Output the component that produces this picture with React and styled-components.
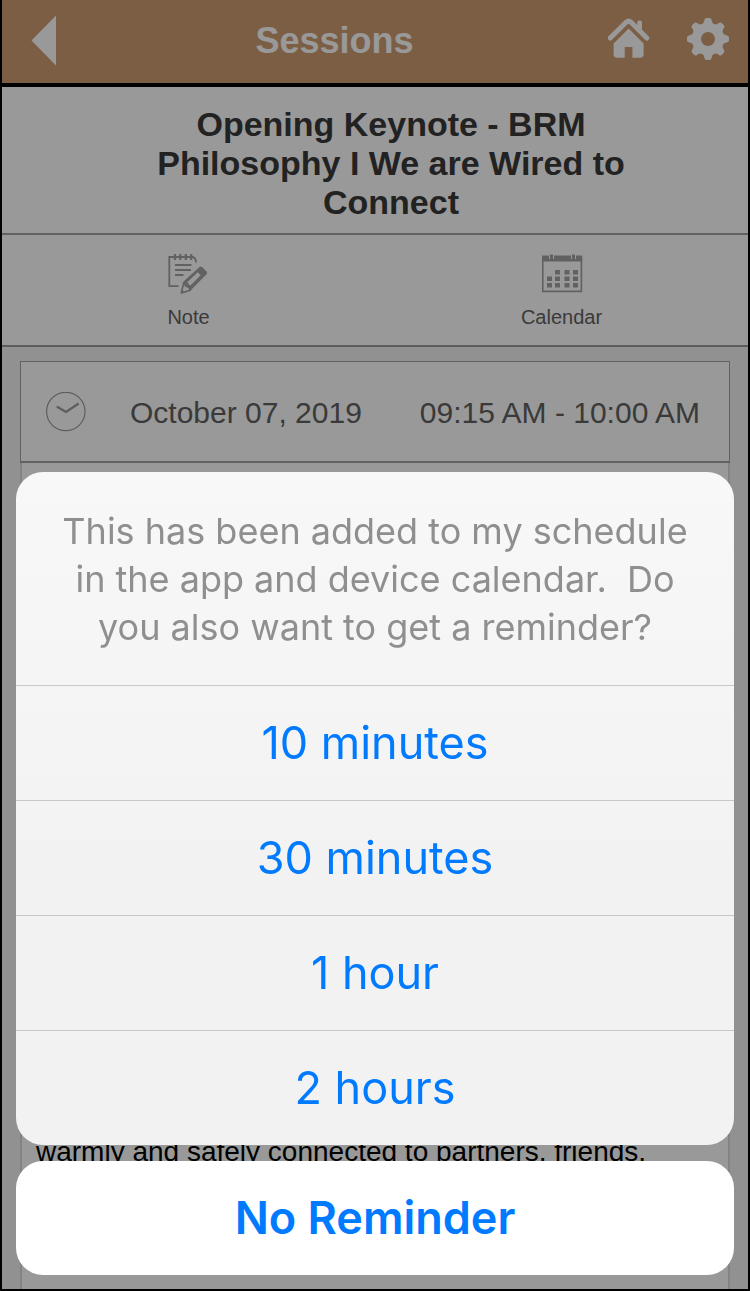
import styled, { createGlobalStyle } from 'styled-components'

const GlobalStyle = createGlobalStyle`
    *{
        box-sizing: border-box;
    }
    body{
        margin: 0;
        background: #000;
        font-family: 'Liberation Sans', Arial, sans-serif;
    }
    h1, h2, p{
        margin: 0;
    }
    button{
        border: 0;
        padding: 0;
        background: none;
        font: inherit;
        color: inherit;
        cursor: pointer;
    }
    svg{
        display: block;
    }
`

const Page = styled.div`
    min-height: 100vh;
    display: flex;
    flex-direction: column;
    border: solid #000;
    border-width: 0 2px 2px;
    background: #f2f2f2;
`

const Header = styled.header`
    height: 87px;
    display: flex;
    align-items: center;
    padding-bottom: 2px;
    background: #cf9d73;
    border-bottom: 4px solid #000;
    color: #fff;
`

const BackButton = styled.button`
    padding: 0 30px 0 28px;
`

const HeaderTitle = styled.h1`
    flex: 1;
    text-align: center;
    font-size: 36px;
    line-height: 40px;
`

const HeaderActions = styled.div`
    display: flex;
    gap: 36px;
    padding: 0 18px 4px 25px;
`

const SessionTitle = styled.h2`
    padding: 18px 116px 11px 148px;
    background: #fff;
    border-bottom: 2px solid #a2a2a2;
    color: #3a3a3a;
    font-size: 34px;
    line-height: 39px;
    text-align: center;
`

const Tools = styled.nav`
    display: flex;
    background: #fff;
    border-bottom: 2px solid #9a9a9a;
`

const ToolButton = styled.button`
    flex: 1;
    height: 110px;
    display: flex;
    flex-direction: column;
    align-items: center;
    gap: 10px;
    padding-top: 18px;
    color: #626262;
    font-size: 20px;
    line-height: 24px;
`

const Card = styled.main`
    flex: 1;
    display: flex;
    flex-direction: column;
    margin: 14px 18px 0;
    background: #fff;
`

const DateRow = styled.div`
    height: 102px;
    display: flex;
    align-items: center;
    padding: 0 29px 0 25px;
    border: 1px solid #a2a2a2;
    border-bottom-width: 2px;
    color: #626262;
    font-size: 30px;
    line-height: 36px;
`

const SessionDate = styled.span`
    margin-left: 44px;
    padding-top: 2px;
`

const SessionTime = styled.span`
    margin-left: auto;
    padding-top: 2px;
`

const Description = styled.div`
    flex: 1;
    display: flex;
    align-items: flex-end;
    padding: 0 14px 120px;
    border: solid #dadada;
    border-width: 0 2px;
    color: #000;
    font-size: 28px;
    line-height: 34px;
`

const Backdrop = styled.div`
    position: fixed;
    inset: 0;
    display: flex;
    flex-direction: column;
    justify-content: flex-end;
    gap: 16px;
    padding: 16px;
    background: rgba(0, 0, 0, 0.4);
    font-family: Inter, 'Liberation Sans', sans-serif;
`

const Sheet = styled.div`
    overflow: hidden;
    border-radius: 27px;
    background: linear-gradient(#f8f8f8, #f5f5f5 30%, #f2f2f2 60%, #f2f2f2);
`

const Message = styled.p`
    padding: 35px 40px 34px;
    color: #8f8f8f;
    font-size: 36px;
    line-height: 48px;
    text-align: center;
    white-space: pre-wrap;
`

const SheetButton = styled.button`
    display: block;
    width: 100%;
    height: 115px;
    border-top: 1px solid #c8c8c8;
    color: #007aff;
    font-size: 45px;
    line-height: 52px;
`

const CancelButton = styled(SheetButton)`
    height: 114px;
    border-top: 0;
    border-radius: 27px;
    background: #fff;
    font-weight: 600;
`

const reminders = ['10 minutes', '30 minutes', '1 hour', '2 hours']
const teeth = [0, 45, 90, 135, 180, 225, 270, 315]

function BackIcon() {
  return (
    <svg width='26' height='52' viewBox='0 0 26 52' fill='currentColor'>
        <path d='M26 .5v50L1.500 25.500z'/>
    </svg>
  )
}

function HomeIcon() {
  return (
    <svg width='42' height='42' viewBox='0 0 42 42' fill='currentColor'>
        <path d='M2.200 20 18.400 4q2.200-1.800 4.400 0L38.800 20' fill='none' stroke='currentColor' strokeWidth='5' strokeLinecap='round'/>
        <path d='M29.200 11V4.500q0-2 2-2h.800q2 0 2 2v11z'/>
        <path d='M20.600 10.500 35.600 25.500V36q0 3.800-3.800 3.800h-7.400V29H16.700v10.800H9.400q-3.800 0-3.800-3.800V25.500z'/>
    </svg>
  )
}

function GearIcon() {
  return (
    <svg width='44' height='44' viewBox='-22 -22 44 44' fill='currentColor'>
        <circle r='11.500' fill='none' stroke='currentColor' strokeWidth='9'/>
        {teeth.map(angle => (
          <path
            key={angle}
            transform={`rotate(${angle})`}
            d='M-5-11-6.200-14.800C-4.500-15.500-4-17-3.600-19Q-3.200-21-1.500-21h3Q3.200-21 3.600-19C4-17 4.500-15.500 6.200-14.800L5-11z'
          />
        ))}
    </svg>
  )
}

function NoteIcon() {
  return (
    <svg width='42' height='42' viewBox='0 0 42 42' fill='none' stroke='#a2a2a2' strokeWidth='1.800'>
        <path d='M10.500 33.200H1.300V4H24.500q3.500.5 3.500 5.500'/>
        <path d='M7 1v6M12.300 1v6M17.800 1v6M23.200 1v6' strokeWidth='2.200'/>
        <path d='M7 12h16.500M7 17h16M7 22h8.500'/>
        <path d='M15.500 28.500 31.500 14q1.500-1 2.800.2l4.200 4.300q1.200 1.300 0 2.800L22.500 37.500z' fill='#a2a2a2' stroke='none'/>
        <path d='m19.200 29.300 10.500-10 3 3-10.500 10.500z' fill='#fff' stroke='none'/>
        <path d='m15.800 29.500-2.500 10.500 9-2.800-1.500-3-3-1.200z' strokeWidth='1.600' strokeLinejoin='round'/>
        <path d='m14 36.500 2.500 2.700-3.500 1.300z' fill='#a2a2a2' stroke='none'/>
    </svg>
  )
}

function CalendarIcon() {
  return (
    <svg width='42' height='42' viewBox='0 0 42 42' fill='#a2a2a2'>
        <path d='M1.800 4v34.400h38.600V4' fill='none' stroke='#a2a2a2' strokeWidth='1.600'/>
        <path d='M1 2.500h7V6h5V2.500h17V6h5V2.500h6.200V8.500H1z'/>
        <path d='M9 1.500h3V6H9zM31 1.500h3V6h-3z'/>
        <path d='M14 17h5v4.500h-5zM23.500 17h5v4.500h-5zM32 17h5v4.500h-5zM6 23.500h5V28H6zM14 23.500h5V28h-5zM23.500 23.500h5V28h-5zM32 23.500h5V28h-5zM6 30h5v4.500H6zM14 30h5v4.500h-5zM23.500 30h5v4.500h-5zM32 30h5v4.500h-5z'/>
    </svg>
  )
}

function ClockIcon() {
  return (
    <svg width='40' height='40' viewBox='0 0 40 40' fill='none' stroke='#9c9c9c' strokeLinecap='round'>
        <circle cx='19.800' cy='19.500' r='19.200' strokeWidth='1.200'/>
        <path d='m11.500 15 8.500 5 12-8' strokeWidth='2.200'/>
    </svg>
  )
}

export default function App() {
  return (
    <>
        <GlobalStyle/>
        <Page>
            <Header>
                <BackButton aria-label='Back'><BackIcon/></BackButton>
                <HeaderTitle>Sessions</HeaderTitle>
                <HeaderActions>
                    <button aria-label='Home'><HomeIcon/></button>
                    <button aria-label='Settings'><GearIcon/></button>
                </HeaderActions>
            </Header>
            <SessionTitle>Opening Keynote - BRM Philosophy I We are Wired to Connect</SessionTitle>
            <Tools>
                <ToolButton><NoteIcon/>Note</ToolButton>
                <ToolButton><CalendarIcon/>Calendar</ToolButton>
            </Tools>
            <Card>
                <DateRow>
                    <ClockIcon/>
                    <SessionDate>October 07, 2019</SessionDate>
                    <SessionTime>09:15 AM - 10:00 AM</SessionTime>
                </DateRow>
                <Description>
                    <p>warmly and safely connected to partners, friends,</p>
                </Description>
            </Card>
        </Page>
        <Backdrop>
            <Sheet role='dialog' aria-labelledby='reminder-message'>
                <Message id='reminder-message'>{'This has been added to my schedule in the app and device calendar.  Do you also want to get a reminder?'}</Message>
                {reminders.map(label => <SheetButton key={label}>{label}</SheetButton>)}
            </Sheet>
            <CancelButton>No Reminder</CancelButton>
        </Backdrop>
    </>
  )
}
